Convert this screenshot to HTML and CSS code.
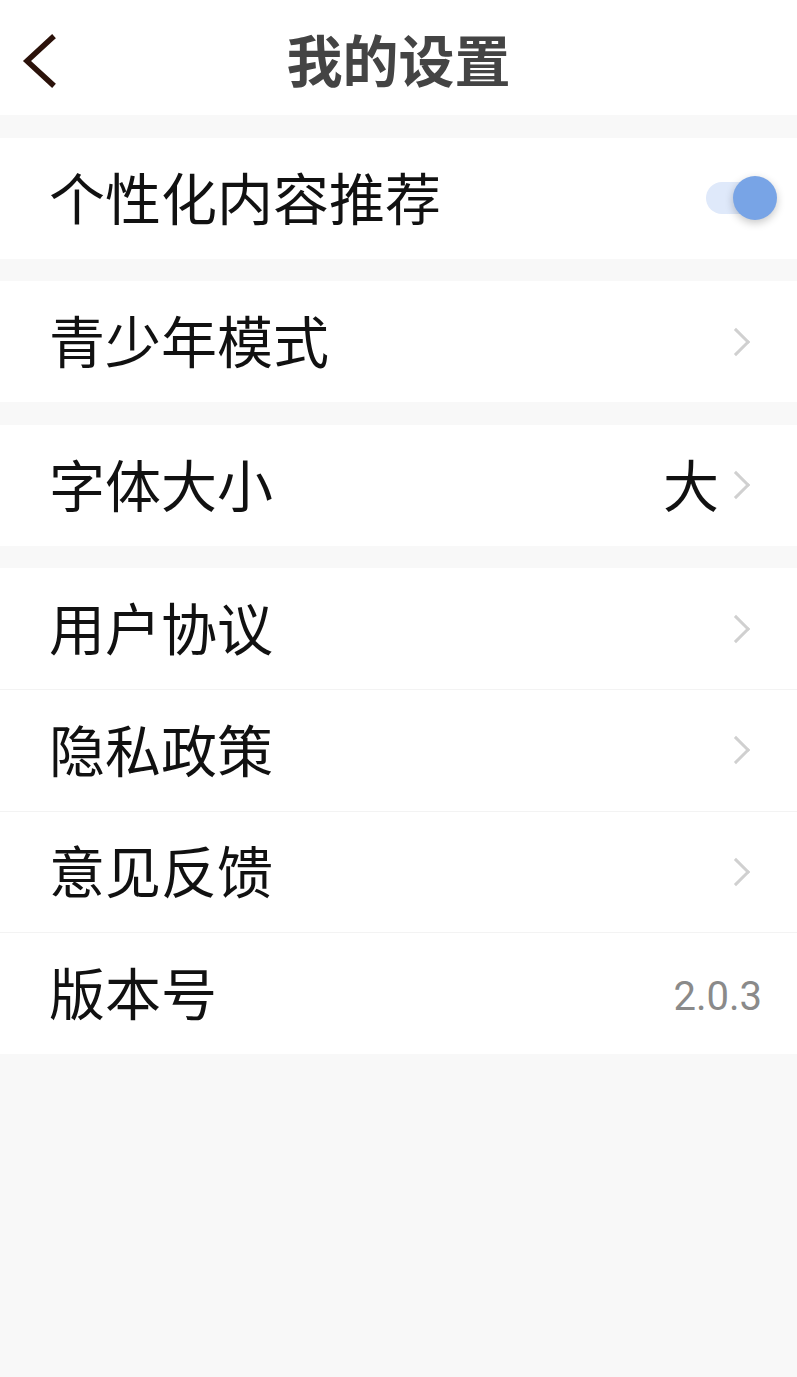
FILE: index.html
```html
<!DOCTYPE html>
<html lang="zh-CN">
<head>
  <meta charset="UTF-8">
  <meta name="viewport" content="width=device-width, initial-scale=1.0">
  <title>我的设置</title>
  <link rel="stylesheet" href="styles.css">
</head>
<body>
  <header class="topbar">
    <a class="back" href="#">
      <svg width="40" height="60" viewBox="0 0 40 60">
        <polyline points="32,9 7,32 32,55" fill="none" stroke="#2b120a" stroke-width="5.5" stroke-linecap="square"/>
      </svg>
    </a>
    <h1>我的设置</h1>
  </header>

  <section class="group">
    <div class="row">
      <span class="label">个性化内容推荐</span>
      <span class="switch on"><span class="knob"></span></span>
    </div>
  </section>

  <section class="group">
    <div class="row">
      <span class="label">青少年模式</span>
      <span class="arrow"></span>
    </div>
  </section>

  <section class="group">
    <div class="row">
      <span class="label">字体大小</span>
      <span class="value">大</span>
      <span class="arrow"></span>
    </div>
  </section>

  <section class="group">
    <div class="row">
      <span class="label">用户协议</span>
      <span class="arrow"></span>
    </div>
    <div class="row">
      <span class="label">隐私政策</span>
      <span class="arrow"></span>
    </div>
    <div class="row">
      <span class="label">意见反馈</span>
      <span class="arrow"></span>
    </div>
    <div class="row">
      <span class="label">版本号</span>
      <span class="version">2.0.3</span>
    </div>
  </section>
</body>
</html>
```

FILE: styles.css
```css
body {
  margin: 0;
  background-color: #f8f8f8;
  font-family: "Noto Sans CJK SC", "Noto Sans", sans-serif;
  color: #111;
}

.topbar {
  height: 115px;
  background-color: #fff;
  display: flex;
  align-items: center;
  justify-content: center;
  position: relative;
}

.topbar h1 {
  margin: 0;
  font-size: 56px;
  font-weight: bold;
  color: #444;
  line-height: 1;
}

.back {
  position: absolute;
  left: 20px;
  top: 29px;
  display: block;
}

.group {
  background-color: #fff;
  margin-top: 22.5px;
}

.row {
  height: 121.5px;
  display: flex;
  align-items: center;
  padding: 0 37px 5px 49px;
  box-sizing: border-box;
  border-top: 1px solid #f3f3f3;
}

.row:first-child {
  border-top: none;
  height: 121px;
}

.label {
  flex: 1;
  font-size: 56px;
  line-height: 1;
}

.value {
  font-size: 56px;
  line-height: 1;
  margin-right: 7px;
}

.arrow {
  width: 17px;
  height: 17px;
  border-top: 3px solid #d0d0d0;
  border-right: 3px solid #d0d0d0;
  transform: rotate(45deg);
  margin-right: 14px;
  margin-top: 5px;
}

.version {
  font-family: Roboto, "Liberation Sans", sans-serif;
  font-size: 40px;
  color: #8a8a8a;
  margin-right: -2px;
  padding-top: 12px;
}

.switch {
  width: 54px;
  height: 32px;
  border-radius: 16px;
  background-color: #dfe9fa;
  position: relative;
  margin-top: 5px;
}

.knob {
  position: absolute;
  right: -17px;
  top: -6px;
  width: 44px;
  height: 44px;
  border-radius: 50%;
  background-color: #78a4e6;
  box-shadow: 0 3px 8px rgba(0, 0, 0, 0.22);
}
```
